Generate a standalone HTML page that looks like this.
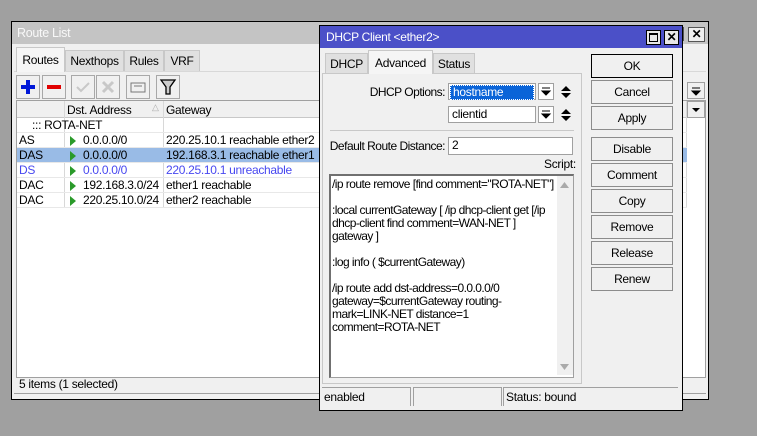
<!DOCTYPE html>
<html><head><meta charset="utf-8"><style>
*{box-sizing:border-box;margin:0;padding:0}
body{width:757px;height:436px;background:#a0a0a0;position:relative;overflow:hidden;font-family:"Liberation Sans",sans-serif;font-size:12px;color:#000;letter-spacing:-0.3px}
.a{position:absolute}
.win{background:#f0f0f0;border:1px solid #000}
.tab{position:absolute;background:#e0e0e0;border:1px solid #c8c8c8;border-bottom:none;text-align:center;line-height:20px}
.tab.on{background:#f5f5f5;border-color:#c8c8c8;z-index:2}
.tb{position:absolute;width:24px;height:24px;border:1px solid #a8a8a8;background:#f0f0f0}
.btn{position:absolute;left:591px;width:82px;height:24px;border:1px solid #8c8c8c;background:#f0f0f0;text-align:center;line-height:22px}
.row{position:absolute;left:17px;width:670px;height:15px;line-height:15px;border-bottom:1px solid #e8e8e8}
.row span{position:absolute}
.tri{display:inline-block;width:0;height:0;border-top:5px solid transparent;border-bottom:5px solid transparent;border-left:6px solid #2a9a2a;position:absolute;left:53px;top:3px}
.fld{position:absolute;background:#fff;border:1px solid #a0a0a0;padding-left:3px;line-height:15px}
.lbl{position:absolute;text-align:right;white-space:nowrap;letter-spacing:-0.5px}
</style></head><body>
<!-- Route List -->
<div class="a win" style="left:11px;top:21px;width:698px;height:379px;background:#f0f0f0">
 <div class="a" style="left:0;top:0;width:696px;height:22px;background:#c4c4c4;color:#f8f8f8;font-size:12.5px;line-height:22px;padding-left:5px">Route List</div>
 <div class="a" style="left:658px;top:5px;width:14px;height:14px;border:1px solid #555;background:#ddd"></div>
 <div class="a" style="left:676px;top:5px;width:17px;height:15px;border:1px solid #555;background:#eee;text-align:center;line-height:13px;font-weight:bold">✕</div>
</div>
<div class="tab on" style="left:16px;top:47px;width:49px;height:25px;line-height:24px">Routes</div>
<div class="tab" style="left:65px;top:50px;width:59px;height:22px">Nexthops</div>
<div class="tab" style="left:124px;top:50px;width:40px;height:22px">Rules</div>
<div class="tab" style="left:164px;top:50px;width:36px;height:22px">VRF</div>
<div class="a" style="left:14px;top:71px;width:692px;height:1px;background:#d8d8d8"></div>
<div class="tb" style="left:16px;top:75px"><svg width="22" height="22"><path d="M11 4v14M4 11h14" stroke="#0018d8" stroke-width="4"/></svg></div>
<div class="tb" style="left:42px;top:75px"><svg width="22" height="22"><path d="M4 11h14" stroke="#e00000" stroke-width="4"/></svg></div>
<div class="tb" style="left:71px;top:75px"><svg width="22" height="22"><path d="M5 11l4 4 8-8" stroke="#c8c8c8" stroke-width="2" fill="none"/></svg></div>
<div class="tb" style="left:96px;top:75px"><svg width="22" height="22"><path d="M6 6l10 10M16 6L6 16" stroke="#c8c8c8" stroke-width="3" fill="none"/></svg></div>
<div class="tb" style="left:126px;top:75px"><svg width="22" height="22"><rect x="4" y="7" width="14" height="9" fill="none" stroke="#777"/><path d="M7 10h8" stroke="#777"/></svg></div>
<div class="tb" style="left:156px;top:75px"><svg width="22" height="22"><path d="M4 4h14l-5 7v7h-4v-7z" fill="#ccc" stroke="#000" stroke-width="1.3"/></svg></div>
<!-- table -->
<div class="a" style="left:16px;top:100px;width:690px;height:278px;background:#fff;border:1px solid #a0a0a0"></div>
<div class="a" style="left:17px;top:101px;width:688px;height:17px;background:#f0f0f0;border-bottom:1px solid #c8c8c8"></div>
<div class="a" style="left:64px;top:101px;width:1px;height:107px;background:#d8d8d8"></div>
<div class="a" style="left:163px;top:101px;width:1px;height:107px;background:#d8d8d8"></div>
<div class="a" style="left:67px;top:103px">Dst. Address</div>
<div class="a" style="left:152px;top:102px;color:#aaa;font-size:9px">△</div>
<div class="a" style="left:166px;top:103px">Gateway</div>
<div class="a" style="left:686px;top:101px;width:1px;height:107px;background:#d8d8d8"></div>
<div class="a" style="left:687px;top:101px;width:18px;height:17px;background:#f0f0f0;border:1px solid #a0a0a0"><svg width="16" height="15"><path d="M4 6h8l-4 4z"/></svg></div>
<div class="a" style="left:687px;top:82px;width:18px;height:17px;background:#f0f0f0;border:1px solid #a0a0a0"><svg width="16" height="15"><path d="M4 8h8l-4 4zM4 5h8" stroke="#000"/></svg></div>
<div class="row" style="top:118px"><span style="left:15px">::: ROTA-NET</span></div>
<div class="row" style="top:133px"><span style="left:2px">AS</span><i class="tri"></i><span style="left:66px">0.0.0.0/0</span><span style="left:149px">220.25.10.1 reachable ether2</span></div>
<div class="row" style="top:148px;background:#99bbe6"><span style="left:2px">DAS</span><i class="tri"></i><span style="left:66px">0.0.0.0/0</span><span style="left:149px">192.168.3.1 reachable ether1</span></div>
<div class="row" style="top:163px;color:#4848f0"><span style="left:2px">DS</span><i class="tri"></i><span style="left:66px">0.0.0.0/0</span><span style="left:149px">220.25.10.1 unreachable</span></div>
<div class="row" style="top:178px"><span style="left:2px">DAC</span><i class="tri"></i><span style="left:66px">192.168.3.0/24</span><span style="left:149px">ether1 reachable</span></div>
<div class="row" style="top:193px"><span style="left:2px">DAC</span><i class="tri"></i><span style="left:66px">220.25.10.0/24</span><span style="left:149px">ether2 reachable</span></div>
<div class="a" style="left:19px;top:377px">5 items (1 selected)</div>
<div class="a" style="left:14px;top:393px;width:692px;height:1px;background:#a0a0a0"></div>

<!-- DHCP Client -->
<div class="a win" style="left:319px;top:25px;width:364px;height:386px"></div>
<div class="a" style="left:320px;top:26px;width:362px;height:22px;background:#4b50c8;color:#fff;line-height:22px;padding-left:6px">DHCP Client &lt;ether2&gt;</div>
<div class="a" style="left:646px;top:30px;width:15px;height:15px;border:1px solid #000;background:#e8e8e8"><div style="margin:2px;width:9px;height:9px;border:1px solid #000;border-top-width:2px"></div></div>
<div class="a" style="left:664px;top:30px;width:15px;height:15px;border:1px solid #000;background:#e8e8e8;text-align:center;line-height:13px;font-weight:bold;font-size:12px">✕</div>
<div class="tab" style="left:325px;top:53px;width:43px;height:21px">DHCP</div>
<div class="tab on" style="left:368px;top:50px;width:65px;height:24px;line-height:24px">Advanced</div>
<div class="tab" style="left:433px;top:53px;width:42px;height:21px">Status</div>
<div class="a" style="left:322px;top:73px;width:260px;height:311px;border:1px solid #c8c8c8;background:#f0f0f0"></div>
<div class="lbl" style="right:312px;top:85px">DHCP Options:</div>
<div class="fld" style="left:448px;top:83px;width:88px;height:17px;padding:1px"><div style="background:#0a64d8;color:#fff;line-height:13px;padding-left:2px;border:1px dotted #fff">hostname</div></div>
<div class="a" style="left:538px;top:83px;width:16px;height:17px;border:1px solid #a0a0a0;background:#fff"><svg width="14" height="15"><path d="M3 7h8l-4 4zM3 4h8" stroke="#000"/></svg></div>
<div class="a" style="left:560px;top:84px"><svg width="12" height="16"><path d="M1 7h10L6 2zM1 9h10l-5 5z"/></svg></div>
<div class="fld" style="left:448px;top:106px;width:88px;height:17px">clientid</div>
<div class="a" style="left:538px;top:106px;width:16px;height:17px;border:1px solid #a0a0a0;background:#fff"><svg width="14" height="15"><path d="M3 7h8l-4 4zM3 4h8" stroke="#000"/></svg></div>
<div class="a" style="left:560px;top:107px"><svg width="12" height="16"><path d="M1 7h10L6 2zM1 9h10l-5 5z"/></svg></div>
<div class="a" style="left:330px;top:130px;width:244px;height:1px;background:#c8c8c8"></div>
<div class="lbl" style="right:312px;top:139px">Default Route Distance:</div>
<div class="fld" style="left:448px;top:137px;width:125px;height:18px">2</div>
<div class="a" style="left:544px;top:157px">Script:</div>
<div class="a" style="left:329px;top:174px;width:245px;height:204px;background:#fff;border:1px solid #a0a0a0;border-top:2px solid #707070;border-left:2px solid #707070;padding:2px 0 0 1px;line-height:13px;letter-spacing:-0.55px;width:245px">
<div style="width:222px">/ip route remove [find comment="ROTA-NET"]<br><br>:local currentGateway [ /ip dhcp-client get [/ip dhcp-client find comment=WAN-NET ] gateway ]<br><br>:log info ( $currentGateway)<br><br>/ip route add dst-address=0.0.0.0/0 gateway=$currentGateway routing-mark=LINK-NET distance=1 comment=ROTA-NET</div>
<div class="a" style="right:0;top:0;width:16px;height:199px;background:#f0f0f0"><svg width="16" height="199"><path d="M3 12h9l-4.5-6z" fill="#aaa"/><path d="M3 188h9l-4.5 6z" fill="#aaa"/></svg></div>
</div>
<div class="btn" style="top:54px;border:1px solid #000">OK</div>
<div class="btn" style="top:80px">Cancel</div>
<div class="btn" style="top:106px">Apply</div>
<div class="btn" style="top:137px">Disable</div>
<div class="btn" style="top:163px">Comment</div>
<div class="btn" style="top:189px">Copy</div>
<div class="btn" style="top:215px">Remove</div>
<div class="btn" style="top:241px">Release</div>
<div class="btn" style="top:267px">Renew</div>
<div class="a" style="left:322px;top:387px;width:89px;height:19px;border-top:1px solid #a0a0a0;border-right:1px solid #a0a0a0;padding-left:2px;line-height:19px">enabled</div>
<div class="a" style="left:413px;top:387px;width:89px;height:19px;border-top:1px solid #a0a0a0;border-left:1px solid #a0a0a0;border-right:1px solid #a0a0a0"></div>
<div class="a" style="left:503px;top:387px;width:175px;height:19px;border-top:1px solid #a0a0a0;border-left:1px solid #a0a0a0;padding-left:2px;line-height:19px">Status: bound</div>
</body></html>
